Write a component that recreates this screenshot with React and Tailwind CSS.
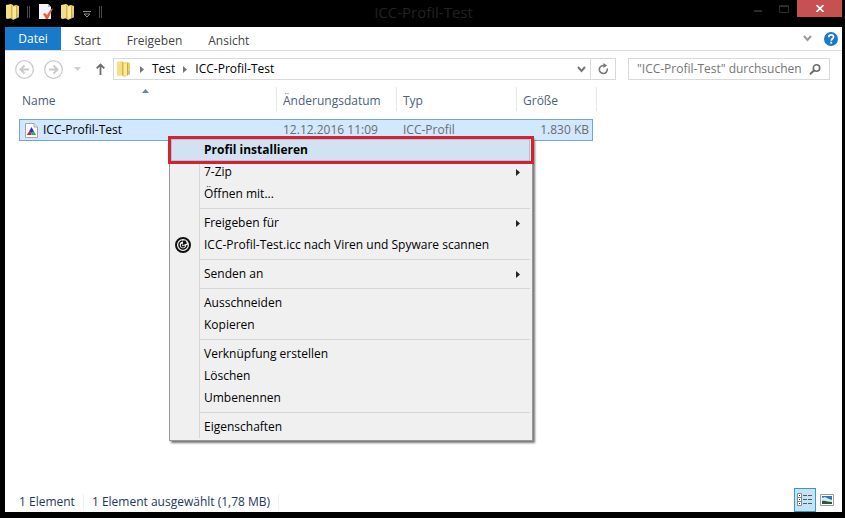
import React from 'react';

const FILE_NAME = 'ICC-Profil-Test';

const tabs = ['Start', 'Freigeben', 'Ansicht'];

const menuGroups = [
  [
    { label: 'Profil installieren', isDefault: true },
    { label: '7-Zip', submenu: true },
    { label: 'Öffnen mit...' },
  ],
  [
    { label: 'Freigeben für', submenu: true },
    { label: 'ICC-Profil-Test.icc nach Viren und Spyware scannen', icon: true },
  ],
  [{ label: 'Senden an', submenu: true }],
  [{ label: 'Ausschneiden' }, { label: 'Kopieren' }],
  [{ label: 'Verknüpfung erstellen' }, { label: 'Löschen' }, { label: 'Umbenennen' }],
  [{ label: 'Eigenschaften' }],
];

const App = () => (
  <div className="flex min-h-screen flex-col bg-black pr-[3px] pb-1.5 pl-[5px] font-['Open_Sans','Noto_Sans',sans-serif] text-xs text-black">
    <TitleBar />
    <main className="flex flex-1 flex-col bg-white">
      <Ribbon />
      <NavigationBar />
      <FileList />
      <StatusBar />
    </main>
  </div>
);

const TitleBar = () => (
  <header className="grid h-[27px] grid-cols-[1fr_auto_1fr] items-start">
    <div className="flex h-6 items-center pl-px">
      <FolderIcon />
      <span className="ml-[7px] h-3 w-[3px] border-x border-[#4a4a4a]" />
      <button aria-label="Eigenschaften" className="ml-[9px]">
        <PropertiesIcon />
      </button>
      <button aria-label="Neuer Ordner" className="ml-2">
        <FolderIcon />
      </button>
      <button aria-label="Symbolleiste anpassen" className="ml-2 pt-1">
        <svg width="8" height="7" viewBox="0 0 8 7" fill="none" stroke="#8a8a8a">
          <path d="M0 .5h8M1 3l3 3 3-3z" />
        </svg>
      </button>
      <span className="ml-2 h-3 w-[3px] border-x border-[#4a4a4a]" />
    </div>
    <h1 className="text-[15px] leading-6 text-[#222]">{FILE_NAME}</h1>
    <div className="flex h-[17px] justify-end">
      <button aria-label="Minimieren" className="flex w-[26px] items-center justify-center">
        <svg width="8" height="8" fill="#2c2c2c">
          <path d="M0 5h8v2H0z" />
        </svg>
      </button>
      <button aria-label="Maximieren" className="flex w-[26px] items-center justify-center">
        <svg width="10" height="8" fill="none" stroke="#2c2c2c">
          <path d="M.5.5h9v7h-9zM0 1.5h10" />
        </svg>
      </button>
      <button aria-label="Schließen" className="flex w-[45px] items-center justify-center bg-[#c75050]">
        <svg width="8" height="7" viewBox="0 0 8 7" stroke="#fff" strokeWidth="1.7">
          <path d="M.5 0l7 7M7.5 0l-7 7" />
        </svg>
      </button>
    </div>
  </header>
);

const Ribbon = () => (
  <nav className="flex h-6 items-stretch border-b border-[#dadbdc] text-[#444]">
    <button className="w-14 bg-[#1979ca] text-white">Datei</button>
    {tabs.map((tab) => (
      <button key={tab} className="px-[13px] pt-1">
        {tab}
      </button>
    ))}
    <div className="ml-auto flex items-center gap-3 pr-1">
      <button aria-label="Menüband erweitern">
        <Chevron color="#999" />
      </button>
      <button aria-label="Hilfe">
        <svg width="14" height="14" viewBox="0 0 14 14">
          <circle cx="7" cy="7" r="7" fill="#1979ca" />
          <path d="M4.7 5.2c0-3.2 4.8-3 4.8-.2 0 1.7-2.3 1.8-2.3 3.7" fill="none" stroke="#fff" strokeWidth="1.7" />
          <path d="M6.3 9.8h1.8v1.8H6.3z" fill="#fff" />
        </svg>
      </button>
    </div>
  </nav>
);

const NavigationBar = () => (
  <div className="flex h-9 items-center pr-3 pl-2.5">
    <button aria-label="Zurück">
      <RoundArrow d="M14 9.5H5.500M9.500 5.500l-4 4 4 4" />
    </button>
    <button aria-label="Vorwärts" className="ml-2.5">
      <RoundArrow d="M5 9.500h8.500M9.500 5.500l4 4-4 4" />
    </button>
    <button aria-label="Zuletzt besucht" className="ml-[11px]">
      <svg width="7" height="4" fill="#cfcfcf">
        <path d="M0 0h7L3.500 4z" />
      </svg>
    </button>
    <button aria-label="Nach oben" className="ml-[15px]">
      <svg width="9" height="12" viewBox="0 0 9 12" fill="none" stroke="#6d6d6d" strokeWidth="1.8">
        <path d="M4.500 12V1.500M.7 5.300l3.800-3.800 3.800 3.800" />
      </svg>
    </button>
    <div className="ml-2 flex h-[22px] flex-1 items-center border border-[#d9d9d9] pl-[3px]">
      <FolderIcon />
      <Triangle className="ml-[9px] text-[#777]" />
      <button className="ml-2">Test</button>
      <Triangle className="ml-2 text-[#777]" />
      <button className="ml-2">{FILE_NAME}</button>
      <button aria-label="Vorherige Orte" className="mr-1 ml-auto">
        <Chevron color="#777" />
      </button>
      <button
        aria-label="Aktualisieren"
        className="flex w-[25px] items-center justify-center self-stretch border-l border-[#d9d9d9]"
      >
        <svg width="11" height="12" viewBox="0 0 11 12" fill="none" stroke="#777" strokeWidth="1.6">
          <path d="M9.200 5.500a4 4 0 1 1-3.400-3" />
          <path d="M5.300 0v5l4-2.500z" fill="#777" stroke="none" />
        </svg>
      </button>
    </div>
    <label className="ml-3 flex h-[22px] w-[202px] items-center border border-[#d9d9d9] px-2">
      <input
        type="text"
        aria-label="Ordner durchsuchen"
        placeholder={`"${FILE_NAME}" durchsuchen`}
        className="min-w-0 flex-1 outline-none placeholder:text-[#757575]"
      />
      <svg width="12" height="11" viewBox="0 0 12 11" fill="none" stroke="#6d6d6d" strokeWidth="1.600">
        <circle cx="7.500" cy="4" r="3.200" />
        <path d="M5.200 6.300L1 10.300" strokeWidth="2" />
      </svg>
    </label>
  </div>
);

const FileList = () => (
  <section className="relative flex-1 pl-3.5">
    <table className="w-[578px] table-fixed border-separate border-spacing-0 whitespace-nowrap">
      <thead>
        <tr className="h-6 text-left text-[#4c607a]">
          <HeaderCell label="Name" className="relative w-[258px] border-r pl-[3px]">
            <svg className="absolute top-0.5 left-[123px]" width="7" height="4" fill="#5d8ba5">
              <path d="M0 4h7L3.500 0z" />
            </svg>
          </HeaderCell>
          <HeaderCell label="Änderungsdatum" className="w-30 border-r pl-1.5" />
          <HeaderCell label="Typ" className="w-30 border-r pl-1.5" />
          <HeaderCell label="Größe" className="w-[76px] pl-1.5" />
          <td className="border-r border-[#e2e8ee]" />
        </tr>
        <tr className="h-2" />
      </thead>
      <tbody>
        <tr className="h-[22px] text-[#6d6d6d]">
          <td className="border-y border-l border-[#70a6cf] bg-[#d1e8ff] pl-[5px] text-black">
            <span className="flex items-center gap-[5px]">
              <ProfileIcon />
              {FILE_NAME}
            </span>
          </td>
          <td className="border-y border-[#70a6cf] bg-[#d1e8ff] pl-1.5">12.12.2016 11:09</td>
          <td className="border-y border-[#70a6cf] bg-[#d1e8ff] pl-1.5">ICC-Profil</td>
          <td className="border-y border-r border-[#70a6cf] bg-[#d1e8ff] pr-[3px] text-right">1.830 KB</td>
          <td />
        </tr>
      </tbody>
    </table>
    <ContextMenu />
  </section>
);

const HeaderCell = ({ label, className, children }) => (
  <th className={`border-[#e2e8ee] pt-1 font-normal ${className}`}>
    {label}
    {children}
  </th>
);

const ContextMenu = () => (
  <div
    role="menu"
    className="absolute top-[50px] left-[164px] w-[364px] border border-[#979797] bg-[#f0f0f0] pt-px pr-0.5 pb-0.5 pl-px shadow-[2px_2px_2px_#777]"
  >
    <div className="relative">
      <span className="absolute inset-y-0 left-7 w-px bg-[#d7d7d7]" />
      {menuGroups.map((group, i) => (
        <div key={i} className={i > 0 ? 'relative mt-[3px] pt-1' : 'relative'}>
          {i > 0 && <hr className="absolute top-0 right-0 left-7 border-[#d7d7d7]" />}
          {group.map((item) => (
            <MenuItem key={item.label} {...item} />
          ))}
        </div>
      ))}
    </div>
    {/* Markierung um den ersten Eintrag */}
    <span className="pointer-events-none absolute -top-0.5 -right-0.5 -left-0.5 h-7 border-3 border-[#d9202e]" />
  </div>
);

const MenuItem = ({ label, isDefault, submenu, icon }) => (
  <button
    role="menuitem"
    className={`flex h-[22px] w-full items-center pr-2.5 text-left ${
      isDefault ? 'bg-[#d1e2f2] font-bold outline -outline-offset-1 outline-[#a9c5e4]' : ''
    }`}
  >
    <span className="flex w-[33px] shrink-0 pl-1">{icon && <ScanIcon />}</span>
    {label}
    {submenu && <Triangle className="ml-auto text-[#222]" />}
  </button>
);

const StatusBar = () => (
  <footer className="flex h-6 items-center pr-2 pl-3.5 text-[#1e395b]">
    <div className="flex pt-1">
      <span className="border-r border-[#f0f0f0] pr-2">1 Element</span>
      <span className="border-r border-[#f0f0f0] px-2">1 Element ausgewählt (1,78 MB)</span>
    </div>
    <button
      aria-label="Details"
      className="ml-auto flex h-6 w-[22px] items-center justify-center border border-[#3399cc] bg-[#c4e4f3]"
    >
      <svg width="16" height="14" viewBox="0 0 16 14">
        <path d="M.5.500h4v4h-4zM.5 4.500h4v4h-4zM.5 8.500h4v4h-4z" fill="#fff" stroke="#7b8b95" />
        <path d="M2 2h1v1H2zM2 6h1v1H2zM2 10h1v1H2z" fill="#223" />
        <path d="M6 2.500h4m1 0h4M6 6.500h4m1 0h4M6 10.500h4m1 0h4" stroke="#4d5d68" />
      </svg>
    </button>
    <button aria-label="Große Symbole" className="ml-1">
      <svg width="14" height="12" viewBox="0 0 14 12">
        <path d="M.5.500h13v11H.5z" fill="#fff" stroke="#9a9a9a" />
        <path d="M2 2h10v8H2z" fill="#2f78b7" />
        <path d="M2 4l3-1 4 2 3 1v2H2z" fill="#d6ebf5" />
        <path d="M2 7c3-1 6 1 10 1v2H2z" fill="#27593f" />
      </svg>
    </button>
  </footer>
);

const Chevron = ({ color }) => (
  <svg width="9" height="7" viewBox="0 0 9 7" fill="none" stroke={color} strokeWidth="2">
    <path d="M1 1l3.500 4L8 1" />
  </svg>
);

const Triangle = ({ className }) => (
  <svg className={className} width="4" height="7" viewBox="0 0 4 7" fill="currentColor">
    <path d="M0 0v7l4-3.500z" />
  </svg>
);

const RoundArrow = ({ d }) => (
  <svg width="19" height="19" viewBox="0 0 19 19" fill="none" stroke="#c9c9c9">
    <circle cx="9.500" cy="9.500" r="8.800" strokeWidth="1.200" />
    <path d={d} strokeWidth="1.800" />
  </svg>
);

const FolderIcon = () => (
  <svg width="14" height="16" viewBox="0 0 14 16">
    <path d="M0 1l5-1 2 1v13l-6 1-1-1z" fill="#f3df8a" />
    <path d="M5 1l2 1v12l-2 1z" fill="#d9b643" />
    <path d="M6 2l4-1 3 1v11l-6 3-1-1z" fill="#ecd06a" />
    <path d="M7 3l3-1v12l-3 1z" fill="#f8e99c" />
    <path d="M10 2l1 .5V14l-1 .5z" fill="#cfa733" />
    <path d="M11 10h2v3l-2 1z" fill="#b5c7a4" />
  </svg>
);

const PropertiesIcon = () => (
  <svg width="14" height="16" viewBox="0 0 14 16">
    <path d="M0 0h9l3 3v12H0z" fill="#f4f4f6" />
    <path d="M9 0v3h3z" fill="#b9bcc4" />
    <path d="M4 10l2-1 2 2 4-6 2-.5L9 15H7z" fill="#e0633f" />
  </svg>
);

const ProfileIcon = () => (
  <svg width="13" height="15" viewBox="0 0 13 15">
    <path d="M.5.500h8.500l3.500 3.500v10.500H.5z" fill="#fff" stroke="#a5a5a5" />
    <path d="M9 .5V4h3.500" fill="#eee" stroke="#a5a5a5" />
    <path d="M6.500 4L4 8.500l2.500 1.500L9 8.500z" fill="#2b35c9" />
    <path d="M4 8.500L1.800 12h4.700v-2z" fill="#d92231" />
    <path d="M9 8.500l2.200 3.500H6.500v-2z" fill="#28b34a" />
  </svg>
);

const ScanIcon = () => (
  <svg width="16" height="16" viewBox="0 0 16 16" fill="none" stroke="#111">
    <circle cx="8" cy="8" r="7" strokeWidth="2" />
    <path d="M7.500 4A4 4 0 1 0 12 8" strokeWidth="1.500" />
    <path d="M7.500 7.200A1.400 1.400 0 1 0 9.300 8.600" strokeWidth="1.300" />
    <path d="M8 8V3.500h2.500L12 6.500z" fill="#111" stroke="none" />
  </svg>
);

export default App;
